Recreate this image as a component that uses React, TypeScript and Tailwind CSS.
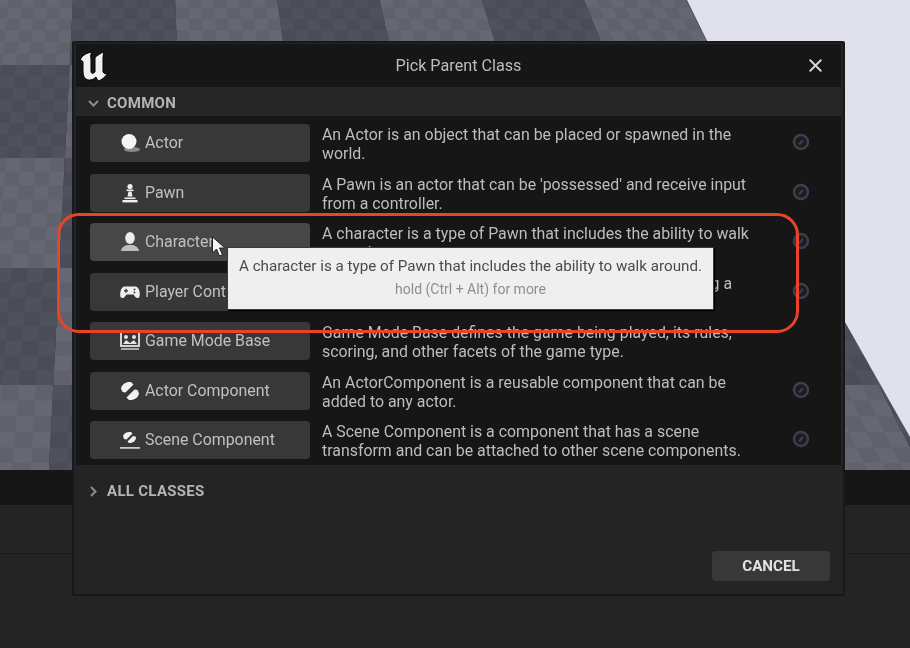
import type { ReactNode } from 'react';
import { X } from 'lucide-react';

const rowsY = [-27, 65, 158, 268, 385, 510];
const VP_X = 130;
const VP_D = 1112;
const SUB = 8;

// floor tiles seen in perspective: big checker squares holding a fine checker
function buildFloor() {
  const paths = { light: '', lightAlt: '', dark: '', darkAlt: '' };
  const xAt = (x0: number, y: number) => VP_X + (x0 - VP_X) * (1 + y / VP_D);
  const quad = (c1: number, c2: number, y1: number, y2: number) =>
    `M${xAt(c1, y1).toFixed(1)} ${y1.toFixed(1)}L${xAt(c2, y1).toFixed(1)} ${y1.toFixed(1)}L${xAt(c2, y2).toFixed(1)} ${y2.toFixed(1)}L${xAt(c1, y2).toFixed(1)} ${y2.toFixed(1)}Z`;
  for (let r = 0; r < rowsY.length - 1; r++) {
    for (let i = -3; i <= 8; i++) {
      const dark = ((i + r) % 2 + 2) % 2 === 0;
      const left = 73 + 102.2 * i;
      const h = rowsY[r + 1] - rowsY[r];
      if (dark) paths.dark += quad(left, left + 102.2, rowsY[r], rowsY[r + 1]);
      else paths.light += quad(left, left + 102.2, rowsY[r], rowsY[r + 1]);
      for (let a = 0; a < SUB; a++) {
        for (let b = 0; b < SUB; b++) {
          if ((a + b) % 2 !== 0) continue;
          const cell = quad(
            left + (102.2 * b) / SUB,
            left + (102.2 * (b + 1)) / SUB,
            rowsY[r] + (h * a) / SUB,
            rowsY[r] + (h * (a + 1)) / SUB,
          );
          if (dark) paths.darkAlt += cell;
          else paths.lightAlt += cell;
        }
      }
    }
  }
  return paths;
}

function Viewport() {
  const floor = buildFloor();
  return (
    <svg width="910" height="470" className="block shrink-0">
      <path d={floor.light} fill="#5f616c" />
      <path d={floor.lightAlt} fill="#656772" />
      <path d={floor.dark} fill="#4a4d57" />
      <path d={floor.darkAlt} fill="#4f525c" />
      <polygon points="687,0 845,322 910,437 910,0" fill="#e1e1ec" />
    </svg>
  );
}

const ActorIcon = () => (
  <svg width="22" height="22" viewBox="0 0 22 22">
    <ellipse cx="13" cy="17.5" rx="8" ry="2.6" fill="#8a8a8a" />
    <circle cx="10" cy="9.5" r="7.5" fill="#f4f4f4" />
  </svg>
);

const PawnIcon = () => (
  <svg width="22" height="22" viewBox="0 0 22 22" fill="#eeeeee">
    <circle cx="11" cy="4.5" r="2.6" />
    <rect x="7.5" y="7.5" width="7" height="1.6" />
    <path d="M9.5 9.5h3l1 5h-5z" />
    <rect x="5.5" y="15.5" width="11" height="1.6" />
    <rect x="3.5" y="18" width="15" height="2.4" />
  </svg>
);

const CharacterIcon = () => (
  <svg width="22" height="22" viewBox="0 0 22 22">
    <ellipse cx="11" cy="7" rx="4.8" ry="6" fill="#ececec" />
    <path d="M2 20c0-3.5 4-5.5 6-6h6c2 .5 6 2.5 6 6z" fill="#bdbdbd" />
  </svg>
);

const GamepadIcon = () => (
  <svg width="22" height="22" viewBox="0 0 22 22">
    <path
      d="M6 5.5h10c2.5 0 4 2 4.5 5 .5 3 .6 6-1.500 6.500-2 .4-3-1.500-4.500-3.500h-7c-1.500 2-2.500 3.900-4.500 3.500-2.100-.5-2-3.500-1.500-6.500.5-3 2-5 4.500-5z"
      fill="#efefef"
    />
    <rect x="5" y="9" width="4" height="1.500" fill="#444" />
    <rect x="6.250" y="7.750" width="1.500" height="4" fill="#444" />
    <circle cx="15.500" cy="8.500" r="1" fill="#444" />
    <circle cx="15.500" cy="11.500" r="1" fill="#444" />
  </svg>
);

const GameModeIcon = () => (
  <svg width="22" height="22" viewBox="0 0 22 22">
    <rect x="2" y="2" width="18" height="14" fill="none" stroke="#e4e4e4" strokeWidth="1.800" />
    <circle cx="7" cy="7" r="2" fill="#e4e4e4" />
    <circle cx="15" cy="7" r="2" fill="#e4e4e4" />
    <path d="M4 14l3-4 4 3 4-3 3 4z" fill="#e4e4e4" />
    <rect x="2" y="18" width="18" height="2" fill="#a8a8a8" />
  </svg>
);

const ComponentIcon = () => (
  <svg width="22" height="22" viewBox="0 0 22 22" fill="#f2f2f2">
    <path d="M2 8.500C3 4 7 1.500 12 2l2.500 2.500L6.500 12.500 3.500 12z" />
    <path d="M20 13.500C19 18 15 20.500 10 20l-2.500-2.500 8-8 3 .5z" />
  </svg>
);

const SceneIcon = () => (
  <svg width="22" height="22" viewBox="0 0 22 22" fill="#f0f0f0">
    <path d="M4 7C5 4 8 2.500 12 3l1.500 1.500L7.500 10.500 5 10z" />
    <path d="M17 9c-.5 3-3 5-7 5l-1.500-1.500 5.500-5.500 2.500 .5z" />
    <rect x="1" y="18" width="20" height="1.800" fill="#c8c8c8" />
  </svg>
);

function HelpIcon() {
  return (
    <svg width="18" height="18" viewBox="0 0 18 18">
      <circle cx="9" cy="9" r="7" fill="#1b1c20" stroke="#3d404c" strokeWidth="2.400" />
      <path d="M7 11.500L11 7" stroke="#3d404c" strokeWidth="2.200" />
    </svg>
  );
}

interface ClassRow {
  label: string;
  icon: ReactNode;
  desc: string;
  help: boolean;
  hover?: boolean;
}

const rows: ClassRow[] = [
  {
    label: 'Actor',
    icon: <ActorIcon />,
    desc: 'An Actor is an object that can be placed or spawned in the world.',
    help: true,
  },
  {
    label: 'Pawn',
    icon: <PawnIcon />,
    desc: "A Pawn is an actor that can be 'possessed' and receive input from a controller.",
    help: true,
  },
  {
    label: 'Character',
    icon: <CharacterIcon />,
    desc: 'A character is a type of Pawn that includes the ability to walk around.',
    help: true,
    hover: true,
  },
  {
    label: 'Player Controller',
    icon: <GamepadIcon />,
    desc: 'A Player Controller is an actor responsible for controlling a Pawn used by the player.',
    help: true,
  },
  {
    label: 'Game Mode Base',
    icon: <GameModeIcon />,
    desc: 'Game Mode Base defines the game being played, its rules, scoring, and other facets of the game type.',
    help: false,
  },
  {
    label: 'Actor Component',
    icon: <ComponentIcon />,
    desc: 'An ActorComponent is a reusable component that can be added to any actor.',
    help: true,
  },
  {
    label: 'Scene Component',
    icon: <SceneIcon />,
    desc: 'A Scene Component is a component that has a scene transform and can be attached to other scene components.',
    help: true,
  },
];

function SectionHeader({ open, title }: { open: boolean; title: string }) {
  return (
    <div className="flex items-center gap-[7px] pl-[11px]">
      <svg width="13" height="13" viewBox="0 0 13 13" fill="none" stroke="#8c8c8c" strokeWidth="2">
        {open ? <path d="M2 4l4.500 4.500L11 4" /> : <path d="M4 2l4.500 4.500L4 11" />}
      </svg>
      <span className="text-[15px] font-bold tracking-[0.3px] text-[#b4b4b4]">{title}</span>
    </div>
  );
}

export default function App() {
  return (
    <div
      className="relative flex h-[648px] w-[910px] flex-col overflow-hidden bg-[#242424] blur-[0.7px]"
      style={{ fontFamily: 'Roboto, sans-serif' }}
    >
      <Viewport />
      <div className="h-[35px] shrink-0 bg-[#161616]" />
      <div className="h-[49px] shrink-0 border-b border-[#1a1a1a]" />

      <div className="absolute left-[72px] top-[41px] flex h-[555px] w-[773px] flex-col rounded-[2px] border-2 border-[#18181a] bg-[#242424] px-[2px] pt-[1px]">
        <div className="relative flex h-[43px] shrink-0 items-center justify-center bg-[#161616] pt-[2px]">
          <svg width="31" height="32" viewBox="0 0 31 32" className="absolute left-[3px] top-[7px]">
            <path
              d="M1 10C2 5 7 2 13 1C11 4 12 6 12 9L12 20C12 23 14 23 16 21L16 7C17 5 22 2 25 1C24 4 24 6 24 9L24 21C25 23 27 23 29 22C26 26 23 29 19 30L17 26C14 29 10 30 7 28C4 26 4 22 4 18L4 12C4 10 3 9 1 10Z"
              fill="#f0f0f0"
              stroke="#000"
              strokeWidth="1"
            />
          </svg>
          <span className="text-[16.2px] text-[#bdbdbd]">Pick Parent Class</span>
          <X className="absolute right-[15px] top-[11px] text-[#d8d8d8]" size={21} strokeWidth={2.2} />
        </div>

        <div className="flex h-[29px] shrink-0 items-center bg-[#262626] pt-[3px]">
          <SectionHeader open title="COMMON" />
        </div>

        <div className="flex h-[349px] shrink-0 flex-col gap-[11.5px] bg-[#161616] pl-[14px] pt-[8px]">
          {rows.map((row) => (
            <div key={row.label} className="flex h-[38px] shrink-0 items-center">
              <div
                className={`flex h-[38px] w-[220px] shrink-0 items-center gap-[4px] rounded-[4px] pl-[29px] ${
                  row.hover ? 'bg-[#474747]' : 'bg-[#383838]'
                }`}
              >
                {row.icon}
                <span className="text-[15.9px] whitespace-nowrap text-[#c0c0c0]">{row.label}</span>
              </div>
              <p className="ml-[12px] w-[432px] shrink-0 pt-[2px] text-[15.9px] leading-[19px] text-[#bdbdbd]">
                {row.desc}
              </p>
              {row.help && (
                <div className="-mt-[2px] ml-[38px]">
                  <HelpIcon />
                </div>
              )}
            </div>
          ))}
        </div>

        <div className="flex h-[52px] shrink-0 items-center">
          <SectionHeader open={false} title="ALL CLASSES" />
        </div>

        <div className="flex justify-end pr-[11px] pt-[34px]">
          <button className="flex h-[30px] w-[118px] items-center justify-center rounded-[4px] bg-[#383838] text-[15.2px] font-bold text-[#e2e2e2]">
            CANCEL
          </button>
        </div>
      </div>

      {/* cursor */}
      <svg width="16" height="22" viewBox="0 0 16 22" className="absolute left-[211px] top-[236px]">
        <path d="M1.500 1v16l4-4 3 7 3-1.300-3-6.700h5.500z" fill="#f4f4f4" stroke="#222" strokeWidth="1" />
      </svg>

      {/* tooltip */}
      <div className="absolute left-[227px] top-[247px] flex h-[63px] w-[487px] flex-col items-center border border-[#3a3a3a] bg-[#efefef] pt-[9px] shadow-[1px_1px_1px_#000]">
        <span className="text-[15.2px] leading-[19px] whitespace-nowrap text-[#4a4a4a]">
          A character is a type of Pawn that includes the ability to walk around.
        </span>
        <span className="mt-[5px] text-[14px] leading-[16px] whitespace-nowrap text-[#8e8e8e]">
          hold (Ctrl + Alt) for more
        </span>
      </div>

      {/* red annotation */}
      <div className="absolute left-[57px] top-[213px] h-[120px] w-[742px] rounded-[22px] border-[3px] border-[#e9432a]" />
    </div>
  );
}
